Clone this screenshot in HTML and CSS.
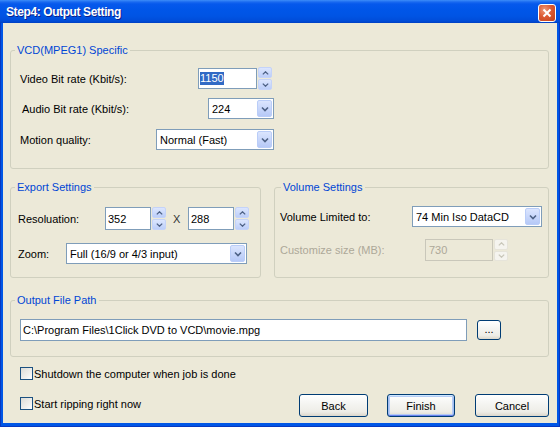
FILE: index.html
```html
<!DOCTYPE html>
<html>
<head>
<meta charset="utf-8">
<title>Step4: Output Setting</title>
<link rel="stylesheet" href="styles.css">
</head>
<body>
<div class="window">
  <div class="titlebar">
    <span class="title">Step4: Output Setting</span>
    <div class="close"><svg width="10" height="10" viewBox="0 0 10 10"><path d="M1.5 1.5 L8.5 8.5 M8.5 1.5 L1.5 8.5" stroke="#fff" stroke-width="2" fill="none"/></svg></div>
  </div>
  <div class="frame">
    <div class="client">
      <div class="group g-vcd">
        <div class="gtitle">VCD(MPEG1) Specific</div>
        <div class="row r-vb">
          <span class="lbl">Video Bit rate (Kbit/s):</span>
          <div class="spinedit">
            <div class="edit e-vb"><span class="sel">1150</span></div>
            <div class="spin">
              <div class="sb"><svg width="7" height="4" viewBox="0 0 7 4"><path d="M0.8 3.4 L3.5 0.8 L6.2 3.4" stroke="#4D6185" stroke-width="1.3" fill="none"/></svg></div>
              <div class="sb"><svg width="7" height="4" viewBox="0 0 7 4"><path d="M0.8 0.6 L3.5 3.2 L6.2 0.6" stroke="#4D6185" stroke-width="1.3" fill="none"/></svg></div>
            </div>
          </div>
        </div>
        <div class="row r-ab">
          <span class="lbl lbl-ab">Audio Bit rate (Kbit/s):</span>
          <div class="combo c-ab"><span class="ctext">224</span><div class="dd"><svg width="8" height="6" viewBox="0 0 8 6"><path d="M1 1.5 L4 4.5 L7 1.5" stroke="#4D6185" stroke-width="1.6" fill="none"/></svg></div></div>
        </div>
        <div class="row r-mq">
          <span class="lbl">Motion quality:</span>
          <div class="combo c-mq"><span class="ctext">Normal (Fast)</span><div class="dd"><svg width="8" height="6" viewBox="0 0 8 6"><path d="M1 1.5 L4 4.5 L7 1.5" stroke="#4D6185" stroke-width="1.6" fill="none"/></svg></div></div>
        </div>
      </div>

      <div class="pair">
        <div class="group g-exp">
          <div class="gtitle">Export Settings</div>
          <div class="frow r-res">
            <span class="lbl l-res">Resoluation:</span>
            <div class="edit e-res"><span>352</span></div>
            <div class="spin s-res">
              <div class="sb"><svg width="7" height="4" viewBox="0 0 7 4"><path d="M0.8 3.4 L3.5 0.8 L6.2 3.4" stroke="#4D6185" stroke-width="1.3" fill="none"/></svg></div>
              <div class="sb"><svg width="7" height="4" viewBox="0 0 7 4"><path d="M0.8 0.6 L3.5 3.2 L6.2 0.6" stroke="#4D6185" stroke-width="1.3" fill="none"/></svg></div>
            </div>
            <span class="times">X</span>
            <div class="edit e-res"><span>288</span></div>
            <div class="spin s-res">
              <div class="sb"><svg width="7" height="4" viewBox="0 0 7 4"><path d="M0.8 3.4 L3.5 0.8 L6.2 3.4" stroke="#4D6185" stroke-width="1.3" fill="none"/></svg></div>
              <div class="sb"><svg width="7" height="4" viewBox="0 0 7 4"><path d="M0.8 0.6 L3.5 3.2 L6.2 0.6" stroke="#4D6185" stroke-width="1.3" fill="none"/></svg></div>
            </div>
          </div>
          <div class="frow r-zoom">
            <span class="lbl l-zoom">Zoom:</span>
            <div class="combo c-zoom"><span class="ctext">Full (16/9 or 4/3 input)</span><div class="dd"><svg width="8" height="6" viewBox="0 0 8 6"><path d="M1 1.5 L4 4.5 L7 1.5" stroke="#4D6185" stroke-width="1.6" fill="none"/></svg></div></div>
          </div>
        </div>
        <div class="group g-vol">
          <div class="gtitle gt-vol">Volume Settings</div>
          <div class="frow r-vl">
            <span class="lbl l-vl">Volume Limited to:</span>
            <div class="combo c-vl"><span class="ctext">74 Min Iso DataCD</span><div class="dd"><svg width="8" height="6" viewBox="0 0 8 6"><path d="M1 1.5 L4 4.5 L7 1.5" stroke="#4D6185" stroke-width="1.6" fill="none"/></svg></div></div>
          </div>
          <div class="frow r-cs">
            <span class="lbl l-cs dis">Customize size (MB):</span>
            <div class="edit e-cs dis-edit"><span>730</span></div>
            <div class="spin s-cs dis-spin">
              <div class="sb"><svg width="7" height="4" viewBox="0 0 7 4"><path d="M0.8 3.4 L3.5 0.8 L6.2 3.4" stroke="#C9C7BA" stroke-width="1.3" fill="none"/></svg></div>
              <div class="sb"><svg width="7" height="4" viewBox="0 0 7 4"><path d="M0.8 0.6 L3.5 3.2 L6.2 0.6" stroke="#C9C7BA" stroke-width="1.3" fill="none"/></svg></div>
            </div>
          </div>
        </div>
      </div>

      <div class="group g-out">
        <div class="gtitle">Output File Path</div>
        <div class="frow r-path">
          <div class="edit e-path"><span>C:\Program Files\1Click DVD to VCD\movie.mpg</span></div>
          <div class="btn browse">...</div>
        </div>
      </div>

      <div class="cbrow cb1">
        <div class="cb"></div><span class="cbl">Shutdown the computer when job is done</span>
      </div>
      <div class="lastrow">
        <div class="cbrow cb2">
          <div class="cb"></div><span class="cbl">Start ripping right now</span>
        </div>
        <div class="buttons">
          <div class="btn b-back">Back</div>
          <div class="btn def b-finish">Finish</div>
          <div class="btn b-cancel">Cancel</div>
        </div>
      </div>
    </div>
  </div>
</div>
</body>
</html>
```

FILE: styles.css
```css
* { box-sizing: border-box; }
html, body { margin: 0; padding: 0; }
body {
  width: 560px; height: 427px; overflow: hidden;
  font-family: "Liberation Sans", Arial, sans-serif;
  font-size: 11px; color: #000;
  background: #ECE9D8;
}
.window {
  width: 560px; height: 427px;
  display: flex; flex-direction: column;
}
.titlebar {
  height: 23px; flex: none;
  display: flex; align-items: center;
  padding-left: 6px;
  background: linear-gradient(#3D8DF9 0px, #1A6AF0 2px, #0659EC 4px, #0056E8 10px, #0054E4 16px, #004CD8 21px, #003FC2 23px);
}
.title {
  color: #fff; font-weight: bold; font-size: 12px;
  letter-spacing: -0.4px;
  text-shadow: 1px 1px 0 #0A1F8C;
  padding-top: 1px;
}
.close {
  margin-left: auto; margin-right: 4px;
  align-self: flex-start; margin-top: 4px;
  width: 18px; height: 18px;
  border: 1px solid #fff; border-radius: 3px;
  background: radial-gradient(circle at 35% 30%, #EE9A7A 0%, #DC5A33 45%, #C2401A 100%);
  display: flex; align-items: center; justify-content: center;
}
.frame {
  flex: 1;
  padding: 0 3px 4px 3px;
  background: #0056E6;
  box-shadow: inset 1px 0 #0838C0, inset -1px 0 #0838C0, inset 0 -1px #0838C0;
}
.client {
  height: 400px;
  background: #ECE9D8;
  padding: 0 8px 0 7px;
  display: flex; flex-direction: column;
}
.group {
  border: 1px solid #D0D0BF;
  border-radius: 3px;
  flex: none;
}
.gtitle {
  margin: -7px 0 0 4px;
  padding: 0 2px;
  height: 13px; line-height: 13px;
  width: max-content;
  background: #ECE9D8;
  color: #0046D5;
}
.gt-vol { margin-left: 6px; }
.g-vcd { margin-top: 27px; height: 119px; }
.row {
  display: flex; align-items: center; justify-content: space-between;
  width: 254px; height: 21px; margin-left: 9px;
}
.r-vb { margin-top: 11px; }
.r-ab { margin-top: 9px; }
.r-mq { margin-top: 10px; }
.lbl { white-space: nowrap; }
.lbl-ab { margin-left: 2px; }
.spinedit { display: flex; align-items: center; margin-right: 2px; }
.edit {
  height: 21px;
  border: 1px solid #7F9DB9;
  background: #fff;
  padding: 0 2px 0 1px;
  display: flex; align-items: center;
  white-space: nowrap; overflow: hidden;
}
.e-vb { width: 59px; }
.sel { background: #316AC5; color: #fff; line-height: 13px; }
.spin {
  width: 14px; height: 23px; margin-left: 1px;
  display: flex; flex-direction: column; gap: 1px;
}
.sb {
  flex: 1;
  border: 1px solid #C4D3F9;
  border-radius: 2px;
  background: linear-gradient(#DCE6FE, #BCCEF9);
  display: flex; align-items: center; justify-content: center;
}
.combo {
  height: 21px;
  border: 1px solid #7F9DB9;
  background: #fff;
  display: flex; align-items: center;
  padding: 1px 1px 1px 3px;
  white-space: nowrap;
}
.ctext { flex: 1; overflow: hidden; }
.dd {
  width: 15px; align-self: stretch;
  border: 1px solid #BACDF8;
  border-radius: 2px;
  background: linear-gradient(#DBE5FE, #B6C9F7);
  display: flex; align-items: center; justify-content: center;
}
.c-ab { width: 66px; }
.c-mq { width: 118px; }

.pair { display: flex; gap: 13px; margin-top: 18px; flex: none; }
.g-exp { width: 251px; height: 91px; }
.g-vol { width: 275px; height: 91px; }
.frow { display: flex; align-items: center; }
.r-res { margin: 13px 0 0 7px; height: 23px; }
.l-res { width: 87px; }
.e-res { width: 46px; height: 23px; padding-left: 2px; }
.s-res { height: 23px; }
.times { margin-left: 7px; width: 7px; color: #333; }
.times + .edit { margin-left: 8px; }
.r-zoom { margin: 13px 0 0 7px; height: 21px; }
.l-zoom { width: 48px; }
.c-zoom { width: 181px; }
.r-vl { margin: 12px 0 0 5px; height: 21px; }
.l-vl { width: 132px; }
.c-vl { width: 130px; }
.r-cs { margin: 12px 0 0 5px; height: 22px; }
.l-cs { width: 145px; }
.dis { color: #ACA899; }
.e-cs { width: 68px; height: 22px; padding-left: 3px; }
.dis-edit { background: #ECE9D8; border-color: #C9C7BA; color: #ACA899; }
.s-cs { height: 22px; }
.dis-spin .sb { background: #F5F4EF; border-color: #E6E4DA; }

.g-out { margin-top: 22px; height: 57px; }
.r-path { margin: 12px 0 0 9px; height: 22px; }
.e-path { width: 447px; height: 22px; padding-left: 2px; }
.browse { margin-left: 10px; width: 24px; height: 20px; padding-bottom: 3px; }

.btn {
  border: 1px solid #003C74;
  border-radius: 3px;
  background: linear-gradient(#FFFFFF 0%, #F5F5F2 40%, #EEEDE7 80%, #DCD7CB 100%);
  display: flex; align-items: center; justify-content: center;
  flex: none;
}
.btn.def {
  box-shadow: inset 0 1px 0 #CEE7FF, inset 0 -1px 0 #6982EE, inset 1px 0 0 #A2BCF0, inset -1px 0 0 #A2BCF0, inset 0 0 0 2px #B5CCF5;
}
.cbrow { display: flex; align-items: center; height: 13px; margin-left: 10px; }
.cb {
  width: 13px; height: 13px; flex: none;
  border: 1px solid #1C5180;
  background: linear-gradient(135deg, #DCDCD7 0%, #F0F0EC 60%, #FFFFFF 100%);
}
.cbl { margin-left: 1px; white-space: nowrap; }
.cb1 { margin-top: 10px; }
.lastrow { display: flex; align-items: flex-start; margin-top: 14px; height: 23px; }
.cb2 { margin-top: 3px; }
.buttons { margin-left: auto; display: flex; }
.buttons .btn { height: 23px; }
.b-back { width: 69px; }
.b-finish { width: 68px; margin-left: 19px; }
.b-cancel { width: 74px; margin-left: 20px; }
```
